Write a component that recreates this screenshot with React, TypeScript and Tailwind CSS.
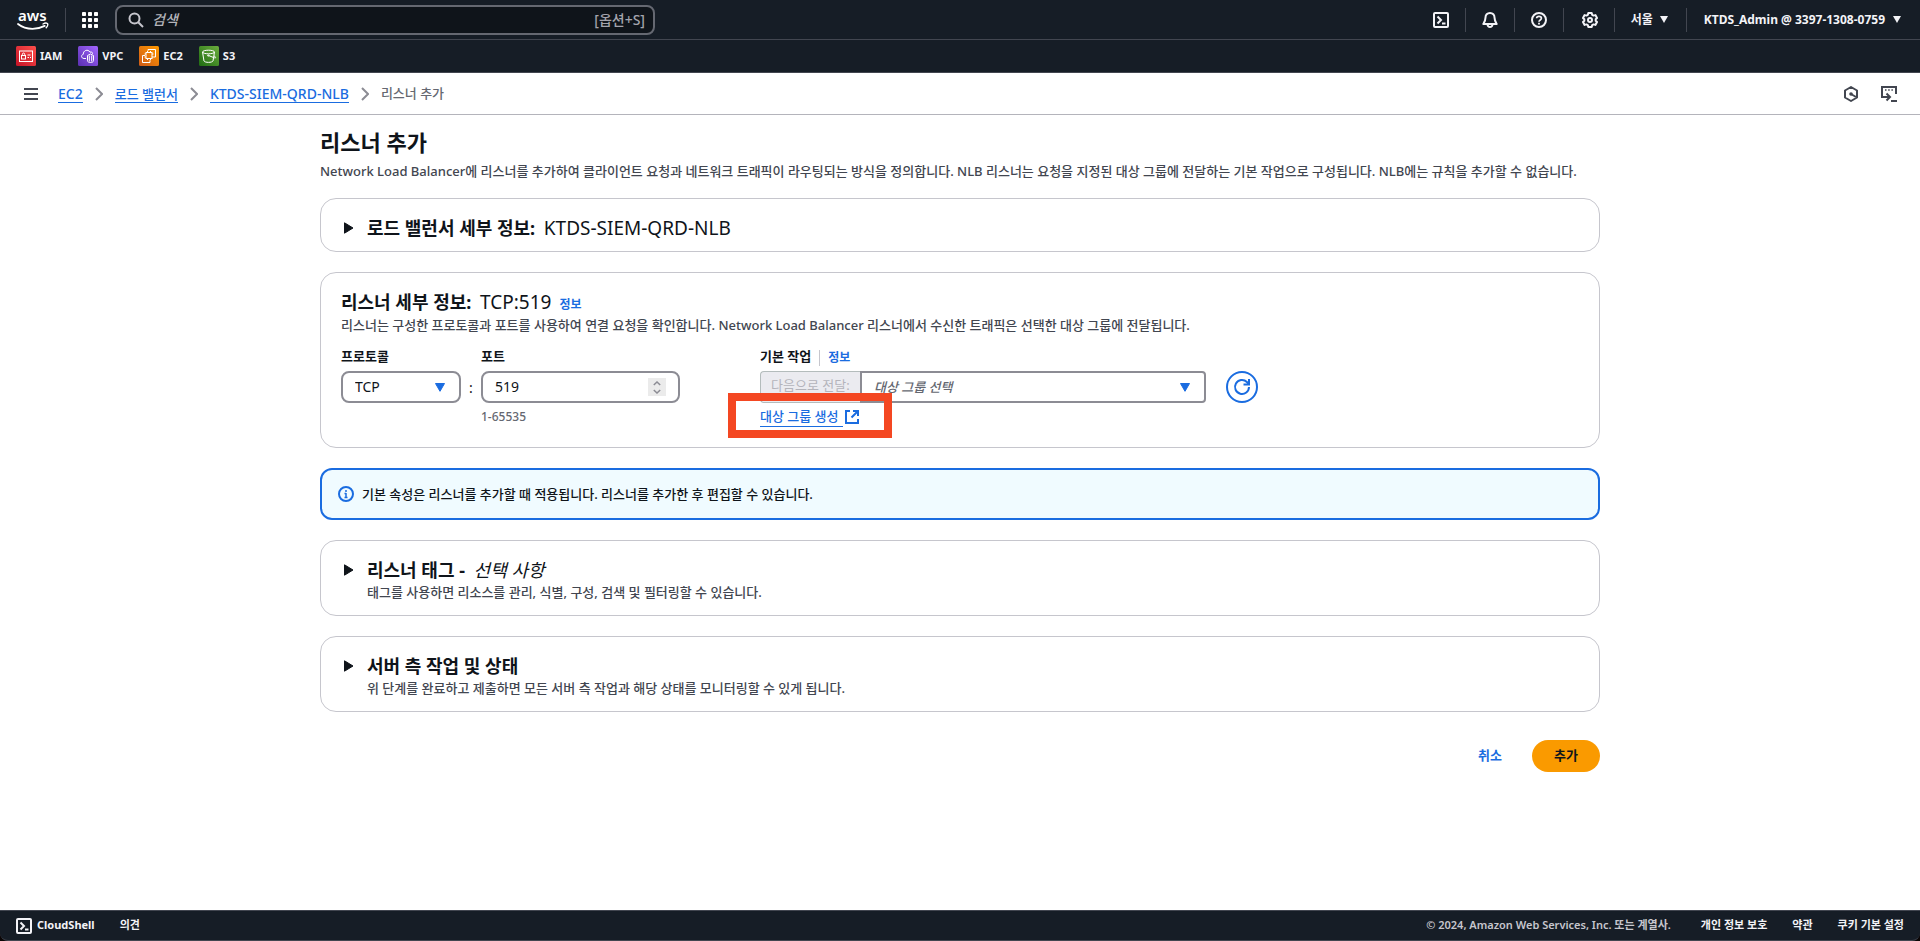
import React from "react";

const LINK = "text-[#1a6ce0]";

function AwsLogo() {
  return (
    <svg width="32" height="32" viewBox="0 0 32 32" aria-hidden="true">
      <text x="1" y="17" fontSize="15" fontWeight="600" fill="#fff" fontFamily="Noto Sans, sans-serif">aws</text>
      <path d="M1 20C5 23.200 10 24.800 15.500 24.800c4.200 0 8.600-1 12.200-2.900" fill="none" stroke="#fff" strokeWidth="1.800" strokeLinecap="round" />
      <path d="M26 20c1.500-.9 3.700-1 4.400-.5.500.6.100 2.700-1.200 4.200" fill="none" stroke="#fff" strokeWidth="1.400" strokeLinecap="round" />
    </svg>
  );
}

function GridIcon() {
  const steps = [0, 6, 12];
  return (
    <svg width="16" height="16" viewBox="0 0 16 16" fill="#fff" aria-hidden="true">
      {steps.map((y) => steps.map((x) => <rect key={`${x}-${y}`} x={x} y={y} width="4" height="4" rx="0.8" />))}
    </svg>
  );
}

function SearchIcon() {
  return (
    <svg width="16" height="16" viewBox="0 0 16 16" fill="none" stroke="#c6c6cd" strokeWidth="2" className="shrink-0" aria-hidden="true">
      <circle cx="6.500" cy="6.500" r="5" />
      <path d="M10.200 10.200 15 15" />
    </svg>
  );
}

function TerminalIcon() {
  return (
    <svg width="16" height="16" viewBox="0 0 16 16" fill="none" stroke="#f3f3f7" strokeWidth="2" strokeLinejoin="round" className="shrink-0" aria-hidden="true">
      <rect x="1" y="1" width="14" height="14" rx="1" />
      <path d="M4.500 4.500 8 8l-3.500 3.500" strokeLinejoin="miter" />
      <path d="M9 11.500h3.500" />
    </svg>
  );
}

function BellIcon() {
  return (
    <svg width="16" height="16" viewBox="0 0 16 16" fill="none" stroke="#f3f3f7" strokeWidth="2" strokeLinejoin="round" aria-hidden="true">
      <path d="M8 1C5.200 1 3.500 3 3.500 5.500c0 3-1 4.500-2.200 6.500h13.400c-1.200-2-2.200-3.500-2.200-6.500C12.500 3 10.800 1 8 1z" />
      <path d="M5.500 12.500C5.700 14.200 6.600 15 8 15s2.300-.8 2.500-2.500" />
    </svg>
  );
}

function HelpIcon() {
  return (
    <svg width="16" height="16" viewBox="0 0 16 16" fill="none" stroke="#f3f3f7" strokeWidth="2" aria-hidden="true">
      <circle cx="8" cy="8" r="7" />
      <path d="M5.600 6.300C5.700 5 6.700 4.300 8 4.300c1.400 0 2.400.8 2.400 2 0 1.700-2.400 1.600-2.400 3.500" strokeWidth="1.700" />
      <path d="M8 10.800v1.700" strokeWidth="1.800" />
    </svg>
  );
}

function GearIcon() {
  return (
    <svg width="16" height="16" viewBox="0 0 16 16" fill="none" stroke="#f3f3f7" strokeWidth="2" strokeLinejoin="round" aria-hidden="true">
      <path d="M6.300 1h3.400l.5 1.900 1.300.7 1.900-.5 1.600 2.900L13.700 7.300v1.400l1.300 1.300-1.600 2.900-1.900-.5-1.300.7-.5 1.900H6.300l-.5-1.900-1.300-.7-1.900.5L1 10l1.300-1.300V7.300L1 6l1.600-2.900 1.900.5 1.300-.7z" />
      <circle cx="8" cy="8" r="2" />
    </svg>
  );
}

function CaretDown() {
  return (
    <svg width="8" height="7" viewBox="0 0 8 7" fill="currentColor" aria-hidden="true">
      <path d="M0 0h8L4 7z" />
    </svg>
  );
}

function SelectCaret() {
  return (
    <svg width="10" height="9" viewBox="0 0 10 9" fill="#1a6ce0" stroke="#1a6ce0" strokeLinejoin="round" aria-hidden="true">
      <path d="M.5.5h9L5 8.300z" />
    </svg>
  );
}

function Chevron() {
  return (
    <svg width="8" height="14" viewBox="0 0 8 14" fill="none" stroke="#8c8c94" strokeWidth="2" aria-hidden="true">
      <path d="m1 1 6 6-6 6" />
    </svg>
  );
}

function ExpandTriangle() {
  return (
    <svg width="10" height="12" viewBox="0 0 10 12" fill="#0f141a" stroke="#0f141a" strokeLinejoin="round" aria-hidden="true">
      <path d="M.5.8v10.400L9 6z" />
    </svg>
  );
}

function HexIcon() {
  return (
    <svg width="16" height="16" viewBox="0 0 16 16" fill="none" stroke="#424650" strokeWidth="2" strokeLinejoin="round" aria-hidden="true">
      <path d="M8 1l6 3.500v7L8 15l-6-3.500v-7z" />
      <circle cx="8" cy="8" r="1.800" fill="#424650" stroke="none" />
      <path d="M8 8l5 3" />
    </svg>
  );
}

function PanelIcon() {
  return (
    <svg width="16" height="16" viewBox="0 0 16 16" fill="none" stroke="#424650" strokeWidth="2" aria-hidden="true">
      <path d="M15 8V1H1v10h7" />
      <path d="M4 4h1.500M7.200 4h1.500M10.400 4h1.500" strokeWidth="1.600" />
      <path d="M5.500 7.500 9 11l-3.500 3.500" />
      <path d="M10 15h6" />
    </svg>
  );
}

function InfoIcon() {
  return (
    <svg width="16" height="16" viewBox="0 0 16 16" fill="none" stroke="#1a6ce0" strokeWidth="2" className="shrink-0" aria-hidden="true">
      <circle cx="8" cy="8" r="7" />
      <path d="M8 4v2M8 7v5M6.500 7.500H8M6.500 11.500h3" strokeWidth="1.500" />
    </svg>
  );
}

function RefreshIcon() {
  return (
    <svg width="18" height="18" viewBox="0 0 18 18" fill="none" stroke="#1a6ce0" strokeWidth="2" aria-hidden="true">
      <path d="M16 9a7 7 0 1 1-2.100-5L16 6.200" />
      <path d="M16 1v5.500h-5.500" />
    </svg>
  );
}

function ExternalIcon() {
  return (
    <svg width="14" height="14" viewBox="0 0 14 14" fill="none" stroke="#1a6ce0" strokeWidth="2" aria-hidden="true">
      <path d="M5 1H1v12h12V9" />
      <path d="M8 1h5v5M13 1 6.500 7.500" />
    </svg>
  );
}

type Service = "IAM" | "VPC" | "EC2" | "S3";

const serviceColors: Record<Service, [string, string]> = {
  IAM: ["#c31327", "#ff4f4b"],
  VPC: ["#5a2fb0", "#a366ff"],
  EC2: ["#cf5a17", "#ff9a00"],
  S3: ["#1f6b12", "#6cae3e"],
};

function ServiceGlyph({ name }: { name: Service }) {
  if (name === "IAM")
    return (
      <>
        <rect x="3.500" y="5" width="13" height="10.500" />
        <rect x="5.500" y="9.500" width="4" height="3.500" />
        <path d="M6.300 9.500V8.200c0-1.600 2.400-1.600 2.400 0v1.300M11.500 9h3M11.500 11.500h1.500M14 11.500h1" />
      </>
    );
  if (name === "VPC")
    return (
      <>
        <path d="M8 12.500H6C3 12.300 2.800 8.800 5.300 8.300 5 4.500 10 2.500 12 6.200c1.500-.8 2.700.3 2.600 1.600" />
        <path d="M9.500 9.500 12.500 8l3 1.500v5.200c0 1.200-1.500 1.800-3 1.800s-3-.6-3-1.800zM11.300 9.500v6M13.700 9.500v6" />
      </>
    );
  if (name === "EC2")
    return (
      <>
        <rect x="7" y="6.500" width="6" height="6" />
        <path d="M9 4.800V3.500h7.500V11H14.500M6 9.500H3.500v7H11V14.200M8.500 5v1.500M11.500 5v1.500M8.500 12.500v1.500M11.500 12.500v1.500M5.500 8H7M13 8h1.500M5.500 11H7M13 11h1.500" />
      </>
    );
  return (
    <>
      <ellipse cx="9.500" cy="6" rx="6" ry="1.800" />
      <path d="M3.500 6 5 15c.8 1.800 8.200 1.800 9 0l1.500-9M9.500 9.500l5 2c3 1.200 2.500-.3.500-1.800" />
      <circle cx="9.300" cy="9.500" r=".7" />
    </>
  );
}

function ServiceLink({ name }: { name: Service }) {
  const [dark, light] = serviceColors[name];
  return (
    <a href={`#${name}`} className="flex items-center gap-1 text-[11px] font-bold text-[#f3f3f7]">
      <svg width="20" height="20" viewBox="0 0 20 20" aria-hidden="true">
        <defs>
          <linearGradient id={`tile-${name}`} x1="0" y1="1" x2="1" y2="0">
            <stop offset="0" stopColor={dark} />
            <stop offset="1" stopColor={light} />
          </linearGradient>
        </defs>
        <rect width="20" height="20" rx="1.500" fill={`url(#tile-${name})`} />
        <g fill="none" stroke="#fff" strokeWidth="1">
          <ServiceGlyph name={name} />
        </g>
      </svg>
      {name}
    </a>
  );
}

function Divider() {
  return <span className="h-6 w-px bg-[#424650]" />;
}

function TopBar() {
  return (
    <header className="bg-[#161d26]">
      <div className="flex h-10 items-center justify-between border-b border-[#424650] pr-[19px] pl-[17px]">
        <div className="flex items-center">
          <a href="#home" aria-label="AWS"><AwsLogo /></a>
          <span className="ml-4 h-6 w-px bg-[#424650]" />
          <button type="button" aria-label="서비스" className="ml-4"><GridIcon /></button>
          <label className="ml-[17px] flex h-[30px] w-[540px] items-center gap-2 rounded-lg border-2 border-[#656871] bg-[#0f141a] pr-2 pl-[11px]">
            <SearchIcon />
            <input type="search" aria-label="검색" placeholder="검색" className="min-w-0 flex-1 bg-transparent text-sm font-medium text-white italic outline-none placeholder:text-[#b4b4bb] placeholder:opacity-100" />
            <span className="text-sm font-medium text-[#a4a4ad]">[옵션+S]</span>
          </label>
        </div>
        <div className="flex items-center gap-4 text-xs font-bold text-[#f3f3f7]">
          <button type="button" aria-label="CloudShell"><TerminalIcon /></button>
          <Divider />
          <button type="button" aria-label="알림"><BellIcon /></button>
          <Divider />
          <button type="button" aria-label="도움말"><HelpIcon /></button>
          <Divider />
          <button type="button" aria-label="설정" className="ml-0.5"><GearIcon /></button>
          <Divider />
          <button type="button" className="mr-0.5 flex items-center gap-[7px]">서울 <CaretDown /></button>
          <Divider />
          <button type="button" className="flex items-center gap-2">
            <span className="pl-px">KTDS_Admin @ 3397-1308-0759</span>
            <CaretDown />
          </button>
        </div>
      </div>
      <nav aria-label="즐겨찾기" className="flex h-[33px] items-center gap-4 border-b border-[#424650] px-4">
        <ServiceLink name="IAM" />
        <ServiceLink name="VPC" />
        <ServiceLink name="EC2" />
        <ServiceLink name="S3" />
      </nav>
    </header>
  );
}

function Crumb({ children, large }: { children: string; large?: boolean }) {
  return (
    <>
      <a href="#crumb" className={`border-b border-[#1a6ce0] font-medium ${LINK} ${large ? "text-sm leading-4" : "text-[13px] leading-4"}`}>{children}</a>
      <Chevron />
    </>
  );
}

function BreadcrumbBar() {
  return (
    <div className="flex h-[42px] items-center justify-between border-b border-[#b4b4bb] pt-px pr-[23px] pl-6">
      <div className="flex items-center">
        <button type="button" aria-label="탐색 열기">
          <svg width="14" height="12" viewBox="0 0 14 12" stroke="#424650" strokeWidth="2" aria-hidden="true">
            <path d="M0 1h14M0 6h14M0 11h14" />
          </svg>
        </button>
        <nav aria-label="이동 경로" className="ml-5 flex items-center gap-3">
          <Crumb large>EC2</Crumb>
          <Crumb>로드 밸런서</Crumb>
          <Crumb large>KTDS-SIEM-QRD-NLB</Crumb>
          <span className="text-[13px] font-medium text-[#656871]">리스너 추가</span>
        </nav>
      </div>
      <div className="flex items-center gap-[22px]">
        <button type="button" aria-label="진단"><HexIcon /></button>
        <button type="button" aria-label="패널"><PanelIcon /></button>
      </div>
    </div>
  );
}

const CARD = "rounded-2xl border border-[#c6c6cd] bg-white px-5";

function ExpandCard({ title, extra, description }: { title: string; extra?: React.ReactNode; description?: string }) {
  return (
    <section className={`${CARD} pt-[17px] pb-[11px]`}>
      <h2>
        <button type="button" aria-expanded="false" className="flex items-center text-left text-lg leading-6 font-bold">
          <span className="flex w-[26px] pl-[3px]"><ExpandTriangle /></span>
          <span>{title} {extra}</span>
        </button>
      </h2>
      {description && <p className="mb-0.5 pl-[26px] text-[13px] leading-5 font-medium text-[#424650]">{description}</p>}
    </section>
  );
}

function ListenerDetails() {
  return (
    <section className={`${CARD} pt-[17px] pb-[18px]`}>
      <h2 className="text-lg leading-6 font-bold">
        리스너 세부 정보: <span className="ml-1 text-[19px] font-normal">TCP:519</span>
        <a href="#info" className={`ml-2 text-xs font-bold ${LINK}`}>정보</a>
      </h2>
      <p className="mt-px text-[13px] leading-5 font-medium text-[#424650]">
        리스너는 구성한 프로토콜과 포트를 사용하여 연결 요청을 확인합니다. Network Load Balancer 리스너에서 수신한 트래픽은 선택한 대상 그룹에 전달됩니다.
      </p>
      <div className="mt-[11px] flex items-start text-[13px] leading-5">
        <div className="w-30">
          <label htmlFor="protocol" className="block font-bold">프로토콜</label>
          <div className="mt-[5px] grid items-center">
            <select id="protocol" defaultValue="TCP" className="col-start-1 row-start-1 h-8 w-full appearance-none rounded-lg border-2 border-[#8c8c94] bg-white px-3 text-sm">
              <option>TCP</option>
              <option>UDP</option>
              <option>TLS</option>
            </select>
            <span className="pointer-events-none col-start-1 row-start-1 mr-4 justify-self-end"><SelectCaret /></span>
          </div>
        </div>
        <span className="w-5 pt-8 text-center text-sm">:</span>
        <div className="w-[199px]">
          <label htmlFor="port" className="block font-bold">포트</label>
          <div className="mt-[5px] flex h-8 items-center rounded-lg border-2 border-[#8c8c94] px-3">
            <input id="port" type="text" inputMode="numeric" defaultValue="519" className="min-w-0 flex-1 text-sm outline-none" />
            <span className="flex h-[18px] w-[18px] items-center justify-center bg-[#ebebeb]">
              <svg width="8" height="13" viewBox="0 0 8 13" fill="none" stroke="#8c8c94" strokeWidth="1.500" aria-hidden="true">
                <path d="M.8 4 4 1l3.200 3M.8 9 4 12l3.200-3" />
              </svg>
            </span>
          </div>
          <p className="mt-0.5 text-xs leading-6 font-medium text-[#656871]">1-65535</p>
        </div>
        <div className="ml-20 w-[446px]">
          <div className="flex items-end">
            <label htmlFor="target" className="font-bold">기본 작업</label>
            <a href="#info" className={`ml-2 border-l border-[#c6c6cd] pl-2 text-xs leading-4 font-bold ${LINK}`}>정보</a>
          </div>
          <div className="mt-[5px] flex">
            <span className="flex h-8 w-[100px] items-center rounded-l-sm border border-r-0 border-[#b4bcbc] bg-[#ebebf0] pb-1 pl-2.5 text-[#b4b4bb]">다음으로 전달:</span>
            <div className="grid flex-1 items-center">
              <select id="target" defaultValue="" className="col-start-1 row-start-1 h-8 w-full appearance-none rounded-r-sm border-2 border-[#8c8c94] bg-white px-3 font-medium text-[#656871] italic">
                <option value="">대상 그룹 선택</option>
              </select>
              <span className="pointer-events-none col-start-1 row-start-1 mr-4 justify-self-end"><SelectCaret /></span>
            </div>
          </div>
          <div className="relative mt-1 flex">
            <a href="#create" className={`flex items-center gap-0.5 font-medium ${LINK}`}>
              <span className="border-b border-[#1a6ce0] pr-1 leading-[19px]">대상 그룹 생성</span>
              <ExternalIcon />
            </a>
            <span className="pointer-events-none absolute -top-3.5 -left-8 h-[45px] w-[164px] border-8 border-[#f44722]" />
          </div>
        </div>
        <button type="button" aria-label="새로 고침" className="mt-[25px] ml-5 flex h-8 w-8 items-center justify-center rounded-full border-2 border-[#1a6ce0]">
          <RefreshIcon />
        </button>
      </div>
    </section>
  );
}

function Footer() {
  return (
    <div className="bg-[linear-gradient(to_bottom,#161d26_50%,#0a0505_50%)]">
      <footer className="flex h-[31px] items-center justify-between rounded-b-lg border-t border-b border-[#424650] bg-[#161d26] px-4 text-[11px] text-[#f3f3f7]">
        <div className="flex items-center gap-[25px] font-bold">
          <button type="button" className="flex items-center gap-[5px]"><TerminalIcon />CloudShell</button>
          <button type="button">의견</button>
        </div>
        <div className="flex items-center font-bold">
          <span className="mr-[30px] font-semibold text-[#c6c6cd]">© 2024, Amazon Web Services, Inc. 또는 계열사.</span>
          <div className="flex gap-[25px]">
            <a href="#privacy">개인 정보 보호</a>
            <a href="#terms">약관</a>
            <a href="#cookies">쿠키 기본 설정</a>
          </div>
        </div>
      </footer>
    </div>
  );
}

export default function App() {
  return (
    <div className="flex min-h-screen flex-col bg-white font-['Noto_Sans','Noto_Sans_CJK_KR',sans-serif] text-[#0f141a]">
      <TopBar />
      <BreadcrumbBar />
      <main className="mx-auto w-full max-w-[1280px] flex-1 pt-[11px]">
        <h1 className="text-[22px] leading-8 font-bold">리스너 추가</h1>
        <p className="mt-[3px] text-[13px] leading-5 font-medium text-[#424650]">
          Network Load Balancer에 리스너를 추가하여 클라이언트 요청과 네트워크 트래픽이 라우팅되는 방식을 정의합니다. NLB 리스너는 요청을 지정된 대상 그룹에 전달하는 기본 작업으로 구성됩니다. NLB에는 규칙을 추가할 수 없습니다.
        </p>
        <div className="mt-[17px] flex flex-col gap-5">
          <ExpandCard title="로드 밸런서 세부 정보:" extra={<span className="ml-1 text-[19px] font-normal">KTDS-SIEM-QRD-NLB</span>} />
          <ListenerDetails />
          <div role="status" className="flex items-center gap-2 rounded-xl border-2 border-[#1a6ce0] bg-[#f0fbff] px-4 py-3.5 text-[13px] leading-5 font-medium">
            <InfoIcon />
            <span>기본 속성은 리스너를 추가할 때 적용됩니다. 리스너를 추가한 후 편집할 수 있습니다.</span>
          </div>
          <ExpandCard title="리스너 태그 -" extra={<em className="ml-1 font-normal">선택 사항</em>} description="태그를 사용하면 리소스를 관리, 식별, 구성, 검색 및 필터링할 수 있습니다." />
          <ExpandCard title="서버 측 작업 및 상태" description="위 단계를 완료하고 제출하면 모든 서버 측 작업과 해당 상태를 모니터링할 수 있게 됩니다." />
        </div>
        <div className="mt-7 flex justify-end gap-2.5 text-[13px] font-bold">
          <button type="button" className={`h-8 rounded-full px-5 ${LINK}`}>취소</button>
          <button type="button" className="h-8 w-[68px] rounded-full bg-[#fa9a00]">추가</button>
        </div>
      </main>
      <Footer />
    </div>
  );
}
